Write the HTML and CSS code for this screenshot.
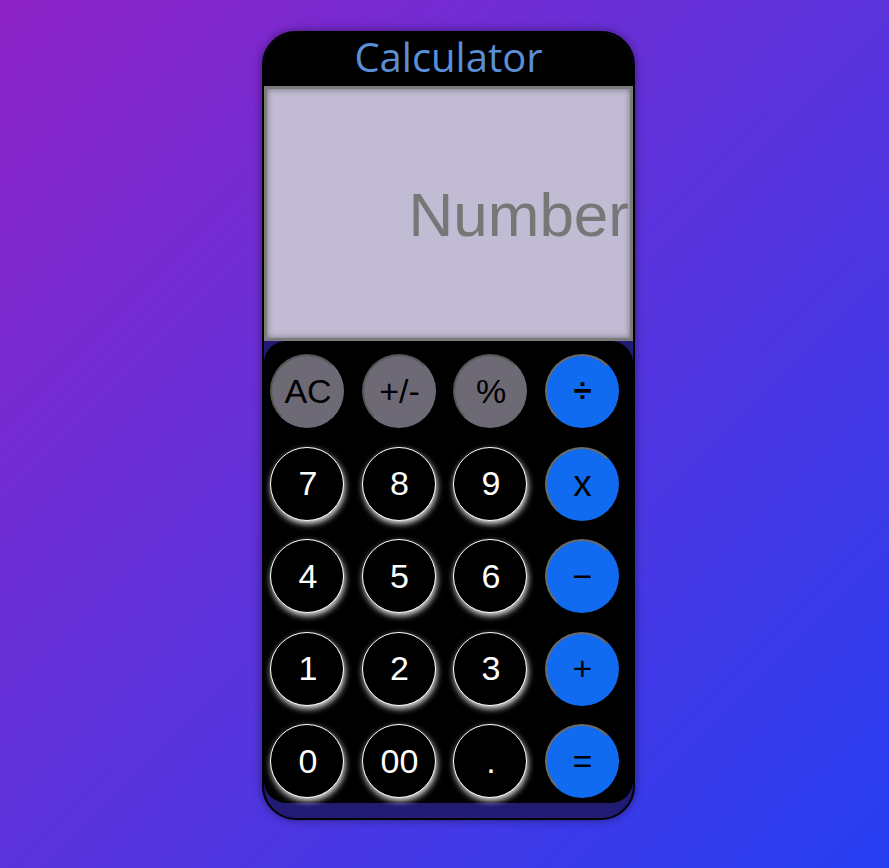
FILE: index.html
```html
<!DOCTYPE html>
<html lang="en">
<head>
<meta charset="utf-8">
<title>Calculator</title>
<link rel="stylesheet" href="styles.css">
</head>
<body>
<div class="calc">
  <header class="calc-head">Calculator</header>
  <div class="screen"><span class="screen-text">Number</span></div>
  <div class="keys">
    <button class="key key-fn">AC</button>
    <button class="key key-fn">+/-</button>
    <button class="key key-fn">%</button>
    <button class="key key-op key-div">÷</button>
    <button class="key key-num">7</button>
    <button class="key key-num">8</button>
    <button class="key key-num">9</button>
    <button class="key key-op key-mul">x</button>
    <button class="key key-num">4</button>
    <button class="key key-num">5</button>
    <button class="key key-num">6</button>
    <button class="key key-op">−</button>
    <button class="key key-num">1</button>
    <button class="key key-num">2</button>
    <button class="key key-num">3</button>
    <button class="key key-op">+</button>
    <button class="key key-num">0</button>
    <button class="key key-num">00</button>
    <button class="key key-num">.</button>
    <button class="key key-op">=</button>
  </div>
</div>
</body>
</html>
```
FILE: styles.css
```css
html, body {
  margin: 0;
  padding: 0;
}
body {
  width: 889px;
  height: 868px;
  background: linear-gradient(135deg, #8e23c7 0%, #5b33dc 50%, #263ff2 100%);
  box-sizing: border-box;
  padding: 31px 0 0 8px;
  display: flex;
  justify-content: center;
  align-items: flex-start;
  font-family: "Liberation Sans", Arial, sans-serif;
}
.calc {
  width: 369px;
  border: 2px solid #000;
  border-radius: 34px;
  background: #221b74;
  overflow: hidden;
  box-shadow: 0 0 10px rgba(0, 0, 0, 0.45);
  padding-bottom: 15px;
}
.calc-head {
  height: 53px;
  background: #000;
  color: #5a8fd6;
  font-family: "Open Sans", sans-serif;
  font-size: 40px;
  line-height: 48px;
  text-align: center;
}
.screen {
  height: 255px;
  box-sizing: border-box;
  border: 3px solid #7b7b7b;
  background: #c1bbd3;
  box-shadow: inset 0 0 6px rgba(80, 80, 80, 0.7);
  display: flex;
  align-items: center;
  justify-content: flex-end;
  overflow: hidden;
  padding-right: 1px;
}
.screen-text {
  font-size: 62px;
  color: #777777;
  white-space: nowrap;
  padding-top: 2px;
}
.keys {
  background: #000;
  border-radius: 22px;
  height: 462px;
  box-sizing: border-box;
  padding: 13px 14px 5px 6px;
  display: grid;
  grid-template-columns: repeat(4, 74px);
  grid-auto-rows: 74px;
  column-gap: 17.5px;
  row-gap: 18.5px;
}
.key {
  width: 74px;
  height: 74px;
  border-radius: 50%;
  box-sizing: border-box;
  font-family: "Liberation Sans", Arial, sans-serif;
  font-size: 34px;
  padding: 0 0 0 2px;
  display: flex;
  align-items: center;
  justify-content: center;
  cursor: pointer;
}
.key-num {
  background: #000;
  color: #fff;
  border: 1px solid #fff;
  box-shadow: 1px 3px 6px rgba(255, 255, 255, 0.9);
}
.key-fn {
  background: #6d6a76;
  color: #000;
  border: 2px solid;
  border-color: #575757 #6d6a76 #6d6a76 #575757;
}
.key-op {
  background: #106bf0;
  color: #000;
  border: 2px solid;
  border-color: #6a6a6a #106bf0 #106bf0 #6a6a6a;
}
.key-div {
  font-size: 33px;
  font-weight: bold;
}
.key-mul {
  font-size: 37px;
}
```
